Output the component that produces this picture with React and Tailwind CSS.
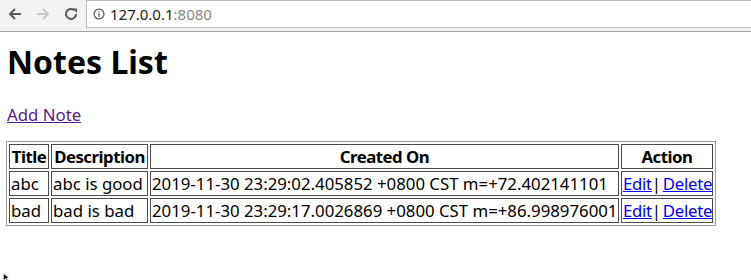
import React from "react";

const rows = [
  { t: "abc", d: "abc is good", c: "2019-11-30 23:29:02.405852 +0800 CST m=+72.402141101" },
  { t: "bad", d: "bad is bad", c: "2019-11-30 23:29:17.0026869 +0800 CST m=+86.998976001" },
];

export default function App() {
  const font = { fontFamily: '"Noto Sans", "Open Sans", sans-serif' };
  const th = "border border-[#4a4a4a] p-[1px] h-[25px] leading-[21px] font-bold text-center whitespace-nowrap tracking-[-0.5px]";
  const td = "border border-[#4a4a4a] p-[1px] h-[25px] leading-[21px] whitespace-nowrap";
  return (
    <div className="w-[751px] h-[280px] bg-white overflow-hidden relative" style={font}>
      {/* browser toolbar */}
      <div className="h-[32px] bg-[#f2f2f2] border-b border-[#a3a3a3] flex items-start">
        <div className="flex items-center h-[28px] pl-[7px] gap-[12px]">
          <svg width="16" height="16" viewBox="0 0 16 16">
            <path d="M14 8H3M8 3L3 8l5 5" fill="none" stroke="#5a5a5a" strokeWidth="2" />
          </svg>
          <svg width="16" height="16" viewBox="0 0 16 16">
            <path d="M2 8h11M8 3l5 5-5 5" fill="none" stroke="#c8c8c8" strokeWidth="2" />
          </svg>
          <svg width="16" height="16" viewBox="0 0 16 16">
            <path d="M13 8a5 5 0 1 1-1.6-3.7" fill="none" stroke="#5a5a5a" strokeWidth="2" />
            <path d="M9.5 2.5h4.5V7z" fill="#5a5a5a" />
          </svg>
        </div>
        <div className="ml-[7px] flex-1 h-[28px] bg-white border border-[#bdbdbd] border-r-0 flex items-center pl-[6px] gap-[5px]">
          <svg width="12" height="12" viewBox="0 0 14 14">
            <circle cx="7" cy="7" r="5.8" fill="none" stroke="#5a5a5a" strokeWidth="1.4" />
            <rect x="6.3" y="6" width="1.4" height="4.2" fill="#5a5a5a" />
            <rect x="6.3" y="3.6" width="1.4" height="1.4" fill="#5a5a5a" />
          </svg>
          <span className="text-[15px] leading-none text-[#222]">
            127.0.0.1<span className="text-[#888]">:8080</span>
          </span>
        </div>
      </div>

      <div className="px-[6px]">
        <h1 className="mt-[10px] text-[32px] leading-[40px] font-bold text-black pl-[1px]">Notes List</h1>
        <div className="mt-[23px] text-[16.8px] leading-[20px] pl-[1px]">
          <a href="#" className="underline text-[#551a8b]">Add Note</a>
        </div>
        <table className="mt-[16px] table-fixed border-separate border-spacing-[2px] border border-[#9a9a9a] text-[16.8px] text-black w-[710px]">
          <thead>
            <tr>
              <th className={`w-[40px] ${th}`}>Title</th>
              <th className={`w-[97px] ${th}`}>Description</th>
              <th className={`w-[469px] ${th}`}>Created On</th>
              <th className={`w-[92px] ${th}`}>Action</th>
            </tr>
          </thead>
          <tbody>
            {rows.map((r) => (
              <tr key={r.t}>
                <td className={td}>{r.t}</td>
                <td className={td}>{r.d}</td>
                <td className={td}>{r.c}</td>
                <td className={`${td} tracking-[-0.3px] [word-spacing:-2px]`}>
                  <a href="#" className="underline text-[#0000ee]">Edit</a>| <a href="#" className="underline text-[#0000ee]">Delete</a>
                </td>
              </tr>
            ))}
          </tbody>
        </table>
      </div>

      <svg className="absolute left-[3px] top-[273px]" width="8" height="8" viewBox="0 0 8 8">
        <path d="M0.5 0.5v7l2-2 1.5 2.5 1-0.5-1.5-2.5h2.5z" fill="#000" stroke="#fff" strokeWidth="0.5" />
      </svg>
    </div>
  );
}
